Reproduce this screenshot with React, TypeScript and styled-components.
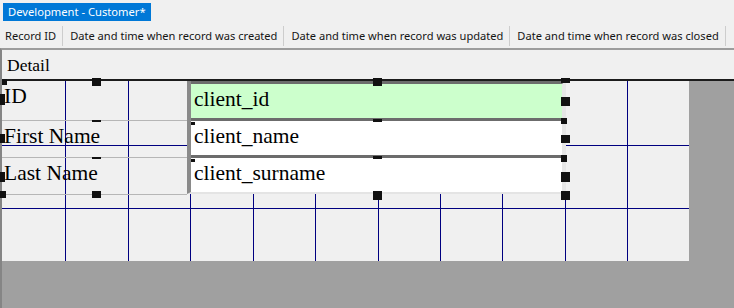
import React from "react";
import styled, { createGlobalStyle } from "styled-components";

const GlobalStyle = createGlobalStyle`
  html, body { margin: 0; padding: 0; background: #f0f0f0; }
  body { width: 734px; height: 308px; overflow: hidden; }
  #root { height: 100%; }
`;

const Page = styled.div`
  display: flex;
  flex-direction: column;
  height: 308px;
  width: 734px;
  background: #f0f0f0;
  font-family: "Noto Sans", "Liberation Sans", sans-serif;
`;

const TabStrip = styled.div`
  display: flex;
  height: 21px;
  padding: 3px 0 0 3px;
  box-sizing: border-box;
`;

const Tab = styled.div`
  height: 18px;
  line-height: 18px;
  padding: 0 5px;
  background: #0078d7;
  color: #ffffff;
  font-size: 11.2px;
  white-space: nowrap;
`;

const Toolbar = styled.div`
  display: flex;
  align-items: center;
  height: 27px;
  padding-top: 1px;
  box-sizing: border-box;
`;

const ToolItem = styled.div<{ $first?: boolean }>`
  position: relative;
  display: flex;
  align-items: center;
  height: 100%;
  padding: 0 7px 0 ${(p) => (p.$first ? "5px" : "7px")};
  font-size: 11.1px;
  color: #141414;
  white-space: nowrap;
  &::after {
    content: "";
    position: absolute;
    right: 0;
    top: 4px;
    bottom: 2px;
    width: 1px;
    background: #cdcdcd;
  }
`;

const Designer = styled.div`
  flex: 1;
  display: flex;
  flex-direction: column;
  border-top: 2px solid #9c9c9c;
  border-left: 2px solid #858585;
  min-height: 0;
`;

const SectionHeader = styled.div`
  height: 31px;
  box-sizing: border-box;
  display: flex;
  align-items: center;
  padding: 1px 0 0 5px;
  border-bottom: 2px solid #1c1c1c;
  font-family: "Liberation Serif", "Times New Roman", serif;
  font-size: 17.5px;
  color: #000;
`;

const Workspace = styled.div`
  flex: 1;
  background: #a0a0a0;
  display: flex;
  align-items: flex-start;
`;

const Canvas = styled.div`
  position: relative;
  width: 687px;
  height: 180px;
  background: #f0f0f0;
  display: flex;
  align-items: flex-start;
`;

const GridLayer = styled.svg`
  position: absolute;
  left: 0;
  top: 0;
  width: 687px;
  height: 180px;
  z-index: 0;
`;

const LabelColumn = styled.div`
  position: relative;
  z-index: 1;
  width: 185px;
  display: flex;
  flex-direction: column;
`;

const FieldLabel = styled.div<{ $h: number }>`
  height: ${(p) => p.$h}px;
  box-sizing: border-box;
  border-bottom: 1px solid #b6b6b6;
  padding: 3px 0 0 2px;
  font-family: "Liberation Serif", "Times New Roman", serif;
  font-size: 21.5px;
  line-height: 24px;
  color: #000;
  white-space: nowrap;
`;

const FieldColumn = styled.div`
  position: relative;
  z-index: 1;
  width: 379px;
  box-sizing: border-box;
  border-left: 4px solid #8a8a8a;
  border-bottom: 2px solid #e4e4e4;
  display: flex;
  flex-direction: column;
`;

const FieldBox = styled.div<{ $bg: string }>`
  height: 37px;
  box-sizing: border-box;
  border-top: 3px solid #6c6c6c;
  border-right: 4px solid #e6e6e6;
  background: ${(p) => p.$bg};
  padding: 3px 0 0 3px;
  font-family: "Liberation Serif", "Times New Roman", serif;
  font-size: 21.5px;
  line-height: 24px;
  color: #000;
  white-space: nowrap;
`;

const Handle = styled.div`
  position: absolute;
  z-index: 3;
  background: #111111;
`;

const columns = [
  "Record ID",
  "Date and time when record was created",
  "Date and time when record was updated",
  "Date and time when record was closed",
];

const labels = [
  { text: "ID", h: 40 },
  { text: "First Name", h: 37 },
  { text: "Last Name", h: 37 },
];

const fields = [
  { text: "client_id", bg: "#ccffcc" },
  { text: "client_name", bg: "#ffffff" },
  { text: "client_surname", bg: "#ffffff" },
];

// page coordinates: x, y, w, h
const handles: [number, number, number, number][] = [
  [373, 78, 9, 8],
  [561, 78, 9, 5],
  [561, 97, 9, 9],
  [373, 119, 9, 3],
  [561, 118, 6, 6],
  [561, 135, 9, 8],
  [373, 156, 9, 3],
  [561, 155, 6, 7],
  [561, 172, 9, 10],
  [373, 191, 9, 9],
  [561, 191, 9, 9],
  [191, 122, 4, 3],
  [191, 159, 4, 3],
  [92, 78, 9, 8],
  [92, 191, 9, 7],
  [0, 191, 6, 7],
  [0, 94, 5, 11],
  [0, 134, 5, 9],
  [0, 172, 5, 10],
  [2, 79, 5, 6],
  [92, 120, 9, 2],
  [92, 157, 9, 2],
];

const CANVAS_X = 2;
const CANVAS_Y = 81;

const vLines = Array.from({ length: 10 }, (_, i) => Math.round(1 + 62.43 * (i + 1)));
const hLines = [64, 127];

export default function App() {
  return (
    <>
      <GlobalStyle />
      <Page>
        <TabStrip>
          <Tab>Development - Customer*</Tab>
        </TabStrip>
        <Toolbar>
          {columns.map((c, i) => (
            <ToolItem key={c} $first={i === 0}>
              {c}
            </ToolItem>
          ))}
        </Toolbar>
        <Designer>
          <SectionHeader>Detail</SectionHeader>
          <Workspace>
            <Canvas>
              <GridLayer viewBox="0 0 687 180">
                {vLines.map((x) => (
                  <line key={"v" + x} x1={x + 0.5} y1={0} x2={x + 0.5} y2={180} stroke="#000080" strokeWidth={1} />
                ))}
                {hLines.map((y) => (
                  <line key={"h" + y} x1={0} y1={y + 0.5} x2={687} y2={y + 0.5} stroke="#000080" strokeWidth={1} />
                ))}
              </GridLayer>
              <LabelColumn>
                {labels.map((l) => (
                  <FieldLabel key={l.text} $h={l.h}>
                    {l.text}
                  </FieldLabel>
                ))}
              </LabelColumn>
              <FieldColumn>
                {fields.map((f) => (
                  <FieldBox key={f.text} $bg={f.bg}>
                    {f.text}
                  </FieldBox>
                ))}
              </FieldColumn>
              {handles.map(([x, y, w, h], i) => (
                <Handle
                  key={i}
                  style={{ left: x - CANVAS_X, top: y - CANVAS_Y, width: w, height: h }}
                />
              ))}
            </Canvas>
          </Workspace>
        </Designer>
      </Page>
    </>
  );
}
